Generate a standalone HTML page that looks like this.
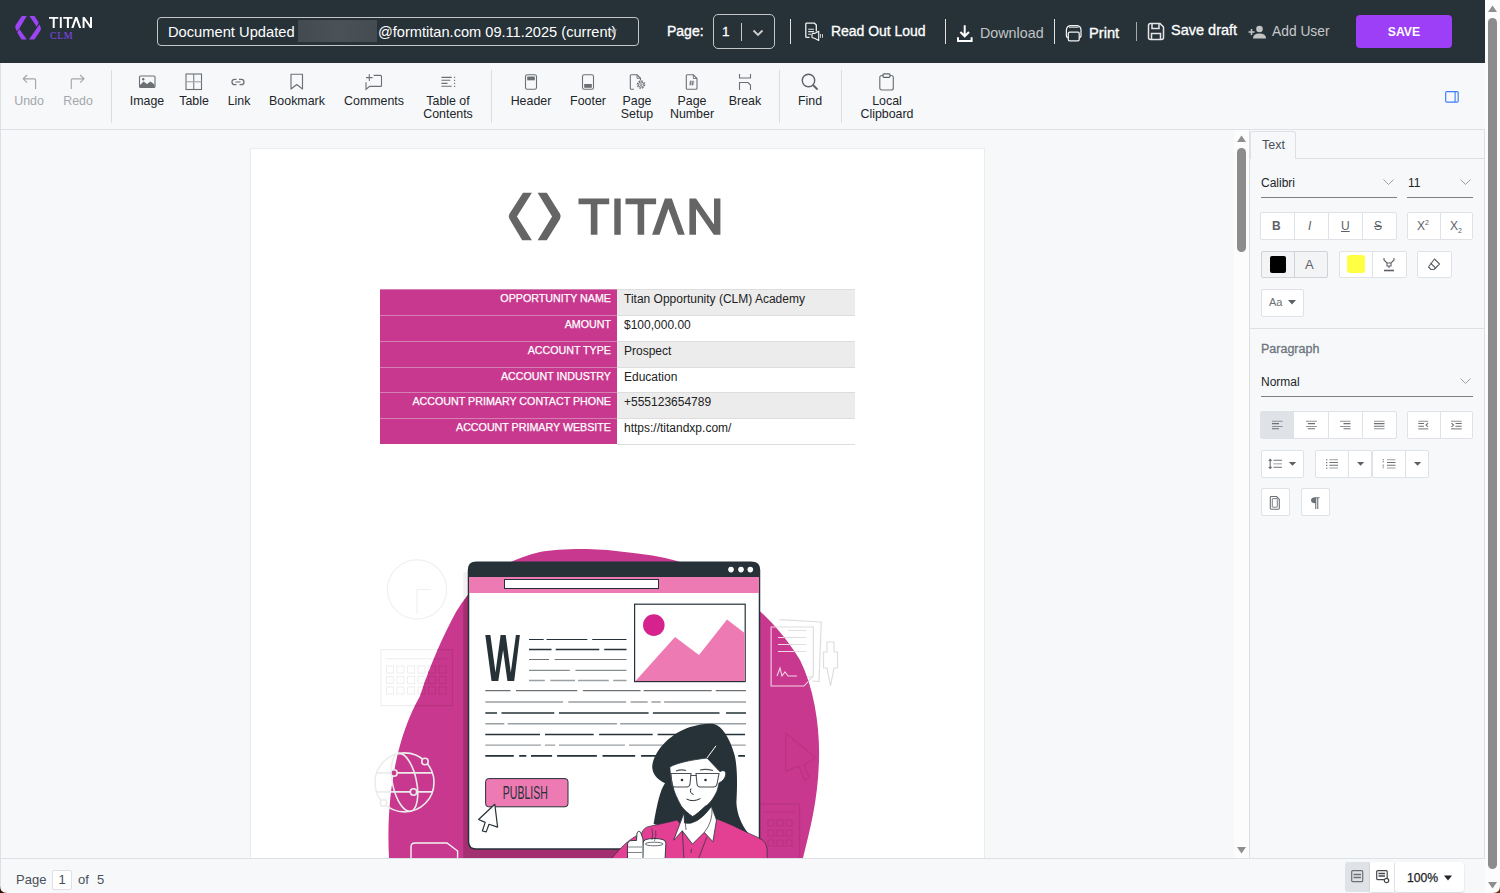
<!DOCTYPE html>
<html><head><meta charset="utf-8">
<style>
*{box-sizing:border-box;margin:0;padding:0}
html,body{width:1500px;height:893px;overflow:hidden;background:#f7f8fa;font-family:"Liberation Sans",sans-serif}
.abs{position:absolute}
#hdr{position:absolute;left:0;top:0;width:1485px;height:63px;background:#263238}
#tb{position:absolute;left:0;top:63px;width:1485px;height:67px;background:#f7f8fa;border-bottom:1px solid #dde1e6;border-left:1px solid #dde1e6}
.ht{position:absolute;color:#fff;white-space:nowrap;font-size:14px}
.vsep{position:absolute;width:1px;background:#e8e8e8}
.tl{position:absolute;font-size:12.4px;color:#212529;text-align:center;line-height:13px;white-space:nowrap}
.tl.dis{color:#a3a7ab}
.tsep{position:absolute;width:1px;top:70px;height:53px;background:#dadde1}
svg{position:absolute;overflow:visible}
#sb{position:absolute;left:1485px;top:0;width:15px;height:893px;background:#fcfcfc}
.pbtn{position:absolute;background:#fff;border:1px solid #dfe2e6;border-radius:2px}
.pt{position:absolute;white-space:nowrap;color:#212529}
</style></head><body>

<!-- HEADER -->
<div id="hdr">
  <!-- logo -->
  <svg style="left:0;top:0" width="60" height="63">
    <path d="M21.8 15.9L26.8 15.9L19.3 28.6L16.8 31.2Q14.6 28.5 15.4 25.6Z" fill="#9d44f5"/>
    <path d="M19.3 29L26.8 39.6L21.5 39.6L17.2 32.5Z" fill="#9d44f5"/>
    <path d="M29.4 15.9L34.4 15.9L38.7 22.6L36.7 26.7Z" fill="#9d44f5"/>
    <path d="M39.4 24.2Q41.6 27.5 40.5 30.6L34.4 39.6L29 39.6L37.2 27.4Z" fill="#9d44f5"/>
  </svg>
  <svg style="left:0;top:0" width="100" height="40"><g fill="#fff" transform="translate(25.2 12.9) scale(0.303)">
  <path d="M78.5 13.5H109.2V19.2H97.4V49.8H90.8V19.2H78.5Z"/>
  <path d="M114.3 13.5H120.7V49.8H114.3Z"/>
  <path d="M125.5 13.5H156.1V19.2H144.2V49.8H137.6V19.2H125.5Z"/>
  <path d="M164.9 13.5H171.8L184.8 49.8H177.9L168.4 23.8L159.5 49.8H152.1Z"/>
  <path d="M189.4 13.5H196L214 39.5V13.5H220.4V49.8H213.8L196 24V49.8H189.4Z"/>
</g></svg>
  <div class="ht" style="left:50px;top:30px;font-size:10px;font-family:'Liberation Serif',serif;color:#8b45f0;letter-spacing:0.5px">CLM</div>

  <div class="abs" style="left:157px;top:17px;width:482px;height:29px;border:1.5px solid #c3c6c9;border-radius:4px"></div>
  <div class="ht" style="left:168px;top:24px;font-size:14.7px">Document Updated</div>
  <div class="abs" style="left:298px;top:20px;width:79px;height:22px;background:linear-gradient(90deg,#434b51,#4a5258,#444c52)"></div>
  <div class="ht" style="left:378px;top:24px;font-size:14.6px">@formtitan.com 09.11.2025 (current)</div>
  <svg style="left:610px;top:29px" width="8" height="6"><path d="M0.5 0.5H7L3.75 5Z" fill="#a9adb1"/></svg>

  <div class="ht" style="left:667px;top:23px;font-size:14px;-webkit-text-stroke:0.35px #fff">Page:</div>
  <div class="abs" style="left:713px;top:14px;width:62px;height:35px;border:1.5px solid #c3c6c9;border-radius:5px"></div>
  <div class="ht" style="left:722px;top:24px;font-size:13.5px;-webkit-text-stroke:0.3px #fff">1</div>
  <div class="abs" style="left:741px;top:23px;width:1px;height:18px;background:#c8c8c8"></div>
  <svg style="left:752px;top:28.7px" width="12" height="8"><path d="M1.5 1.5L6 6L10.5 1.5" stroke="#d0d0d0" stroke-width="1.8" fill="none"/></svg>

  <div class="abs" style="left:790px;top:19px;width:1.3px;height:25px;background:#e0e0e0"></div>
  <!-- read out loud icon -->
  <svg style="left:800px;top:18px" width="30" height="28">
    <path d="M9.5 19.4H6.7Q5.8 19.4 5.8 18.5V6Q5.8 5.2 6.7 5.2H14.5L16.3 7V13.5" stroke="#f0f0f0" stroke-width="1.3" fill="none"/>
    <path d="M8.2 11.2H14M8.2 13.6H14M8.2 16.3H11" stroke="#e6e6e6" stroke-width="1.1"/>
    <path d="M12 16.2Q12 15.3 13 15.3H15L18.7 13.3V22.5L15 20.5Q13 20.2 12 19.4Z" stroke="#f0f0f0" stroke-width="1.2" fill="#263238" stroke-linejoin="round"/>
    <path d="M20.5 16V19.8M22.5 16V19.8" stroke="#d8d8d8" stroke-width="0.9"/>
  </svg>
  <div class="ht" style="left:831px;top:23px;font-size:14px;-webkit-text-stroke:0.3px #fff;letter-spacing:-0.03px">Read Out Loud</div>

  <div class="abs" style="left:945px;top:19px;width:1.3px;height:25px;background:#e0e0e0"></div>
  <svg style="left:956px;top:24px" width="18" height="19">
    <path d="M8.7 1.2V12M4.4 8L8.7 12.3L13 8" stroke="#fff" stroke-width="2" fill="none"/>
    <path d="M2 13.2V17H15.6V13.2" stroke="#fff" stroke-width="2" fill="none"/>
  </svg>
  <div class="ht" style="left:980px;top:25px;font-size:14.3px;color:#c2c4c6">Download</div>

  <div class="abs" style="left:1054px;top:19px;width:1.3px;height:25px;background:#e0e0e0"></div>
  <svg style="left:1060px;top:18px" width="30" height="28"><g transform="translate(-1060 -18)" stroke="#f2f2f2" fill="none" stroke-width="1.25">
    <path d="M1068.2 37.6H1068Q1066.4 37.6 1066.4 35.5V30.2Q1066.4 26.3 1070.3 25.6H1077.6Q1081 26.3 1081 30.2V35.5Q1081 37.6 1079.3 37.6"/>
    <path d="M1069 27.2H1078.6" stroke-width="1"/>
    <rect x="1068.3" y="32.2" width="10.9" height="8.6" rx="1.3"/>
    </g></svg>
  <div class="ht" style="left:1089px;top:25px;font-size:14.7px;-webkit-text-stroke:0.35px #fff">Print</div>

  <div class="abs" style="left:1136px;top:22px;width:1px;height:19px;background:#a5a9ad"></div>
  <svg style="left:1146px;top:22px" width="20" height="20">
    <path d="M2.5 3.5Q2.5 1.5 4.5 1.5H14L17.5 5V15.5Q17.5 17.5 15.5 17.5H4.5Q2.5 17.5 2.5 15.5Z" stroke="#e6e6e6" stroke-width="1.5" fill="none"/>
    <path d="M6 1.5V6.5H13V1.5M5.5 17.5V11.5H14.5V17.5" stroke="#e6e6e6" stroke-width="1.5" fill="none"/>
  </svg>
  <div class="ht" style="left:1171px;top:22px;font-size:14.5px;-webkit-text-stroke:0.3px #fff">Save draft</div>

  <svg style="left:1248px;top:25px" width="20" height="15">
    <path d="M0.5 7H6.5M3.5 4V10" stroke="#c4c4c4" stroke-width="1.6"/>
    <circle cx="11.5" cy="4" r="3.3" fill="#c4c4c4"/>
    <path d="M5 13.5Q5 8.5 11.5 8.5Q18 8.5 18 13.5Z" fill="#c4c4c4"/>
  </svg>
  <div class="ht" style="left:1272px;top:24px;font-size:13.8px;color:#c6c8ca">Add User</div>

  <div class="abs" style="left:1356px;top:15px;width:96px;height:33px;background:#9c3ff6;border-radius:4px"></div>
  <div class="ht" style="left:1356px;width:96px;text-align:center;top:25px;font-size:12.2px;font-weight:bold">SAVE</div>
</div>

<!-- TOOLBAR -->
<div id="tb">
</div>
<div class="tsep" style="left:111px"></div>
<div class="tsep" style="left:491px"></div>
<div class="tsep" style="left:779px"></div>
<div class="tsep" style="left:841px"></div>
<!-- icons -->
<svg style="left:10px;top:68px" width="90" height="25"><g transform="translate(-10 -68)" stroke="#a3a7ab" stroke-width="1.15" fill="none"><path d="M35.6 89V79.8Q35.6 78.8 34.6 78.8H23.3M27.1 75L23.2 78.8L27.1 82.6"/><path d="M71.3 89V79.8Q71.3 78.8 72.3 78.8H83.9M80.1 75L84 78.8L80.1 82.6"/></g></svg>
<svg style="left:138px;top:75px" width="18" height="14"><rect x="1.5" y="1" width="15.5" height="11.5" rx="1" stroke="#6c7075" stroke-width="1.1" fill="none"/><path d="M2 12V10L5.5 6.5L9 9L12.5 6.5L16.5 9.5V12Z" fill="#6c7075"/><circle cx="5.2" cy="4.3" r="1.2" fill="#6c7075"/></svg>
<svg style="left:185px;top:73px" width="18" height="18"><rect x="1" y="1" width="15.5" height="15.5" stroke="#6c7075" stroke-width="1.1" fill="none"/><path d="M8.75 1V16.5" stroke="#6c7075" stroke-width="1"/><path d="M1 8.75H16.5" stroke="#a5a9ad" stroke-width="1.2"/></svg>
<svg style="left:230px;top:77px" width="17" height="10"><path d="M6.5 2.3H4.8Q2 2.3 2 5Q2 7.7 4.8 7.7H6.5M9 2.3H11.2Q14 2.3 14 5Q14 7.7 11.2 7.7H9.5" stroke="#6c7075" stroke-width="1.3" fill="none"/><path d="M5.5 5H10.5" stroke="#6c7075" stroke-width="1.1" fill="none"/></svg>
<svg style="left:290px;top:73px" width="14" height="17"><path d="M1 1.2H12.5V16L6.75 11.5L1 16Z" stroke="#6c7075" stroke-width="1.15" fill="none" stroke-linejoin="round"/></svg>
<svg style="left:355px;top:68px" width="110" height="27"><path d="M369.3-355 0" stroke="none"/><g transform="translate(-355 -68)"><path d="M369.3 74.3V81M366 77.6H372.6" stroke="#6c7075" stroke-width="1.1"/><path d="M373.7 75.4H380.5Q381.5 75.4 381.5 76.4V85.4Q381.5 86.4 380.5 86.4H369.7L366 89.3V82.3" stroke="#6c7075" stroke-width="1.1" fill="none"/>
<path d="M441.4 77.4H451.7M441.4 80.3H450.3M441.4 83.4H447.5M441.4 86.3H451.7" stroke="#6c7075" stroke-width="1.1"/><path d="M454.6 76.8V78M454.6 79.7V80.9M454.6 82.8V84M454.6 85.7V86.9" stroke="#6c7075" stroke-width="1.1"/></g></svg>
<svg style="left:515px;top:68px" width="250" height="27"><g transform="translate(-515 -68)" stroke="#6c7075" fill="none" stroke-width="1.1">
<rect x="525.5" y="74.8" width="11" height="14.5" rx="1.8"/><rect x="527.2" y="76.5" width="7.6" height="3.8" fill="#6c7075" stroke="none"/>
<rect x="582.5" y="74.8" width="11" height="14.5" rx="1.8"/><rect x="584.2" y="84" width="7.6" height="3.8" fill="#6c7075" stroke="none"/>
<path d="M634 89.3H631.3Q630.3 89.3 630.3 88.3V75.8Q630.3 74.8 631.3 74.8H637L640.5 78.3V80.5"/><path d="M637 74.8V78.3H640.5" stroke-width="0.9"/>
<circle cx="641" cy="84.6" r="3.6" stroke-width="1.3" stroke-dasharray="1.6 1.2"/><circle cx="641" cy="84.6" r="2.6" stroke-width="0.9"/><circle cx="641" cy="84.6" r="1" stroke-width="0.8"/>
<path d="M687.3 89.3Q686.3 89.3 686.3 88.3V75.8Q686.3 74.8 687.3 74.8H693.3L697 78.5V88.3Q697 89.3 696 89.3Z"/><path d="M693.3 74.8V78.5H697" stroke-width="0.9"/>
<path d="M690.8 80.5L690.2 85.5M693 80.5L692.4 85.5M689.5 82H694.3M689.3 84H694" stroke-width="0.85"/>
<path d="M739.5 74V78H750.5V74"/><path d="M739.5 90V82.5H748L750.5 85V90"/>
</g></svg>
<svg style="left:801px;top:73px" width="18" height="18"><circle cx="7.5" cy="7.5" r="6.2" stroke="#5d6166" stroke-width="1.4" fill="none"/><path d="M12 12L16.5 16.5" stroke="#5d6166" stroke-width="1.8"/></svg>
<svg style="left:879px;top:73px" width="16" height="18"><rect x="0.8" y="2.5" width="13.5" height="14.5" rx="2" stroke="#6c7075" stroke-width="1.15" fill="none"/><rect x="4" y="0.8" width="7" height="3.5" rx="1" stroke="#5d6166" stroke-width="1.2" fill="#f7f8fa"/></svg>
<svg style="left:1440px;top:86px" width="25" height="22"><g transform="translate(-1440 -86)"><rect x="1445.7" y="91.6" width="12.5" height="10.5" rx="1.2" stroke="#3d7bfa" stroke-width="1.15" fill="none"/><path d="M1455.1 91.6V102" stroke="#3d7bfa" stroke-width="1.1"/></g></svg>
<!-- labels -->
<div class="tl dis" style="left:-1px;width:60px;top:95px">Undo</div>
<div class="tl dis" style="left:48px;width:60px;top:95px">Redo</div>
<div class="tl" style="left:117px;width:60px;top:95px">Image</div>
<div class="tl" style="left:164px;width:60px;top:95px">Table</div>
<div class="tl" style="left:209px;width:60px;top:95px">Link</div>
<div class="tl" style="left:257px;width:80px;top:95px">Bookmark</div>
<div class="tl" style="left:334px;width:80px;top:95px">Comments</div>
<div class="tl" style="left:408px;width:80px;top:95px">Table of<br>Contents</div>
<div class="tl" style="left:491px;width:80px;top:95px">Header</div>
<div class="tl" style="left:548px;width:80px;top:95px">Footer</div>
<div class="tl" style="left:597px;width:80px;top:95px">Page<br>Setup</div>
<div class="tl" style="left:652px;width:80px;top:95px">Page<br>Number</div>
<div class="tl" style="left:705px;width:80px;top:95px">Break</div>
<div class="tl" style="left:770px;width:80px;top:95px">Find</div>
<div class="tl" style="left:847px;width:80px;top:95px">Local<br>Clipboard</div>



<!-- WORKSPACE -->
<div class="abs" style="left:0;top:130px;width:1234px;height:728px;background:#f7f8fa;border-left:1px solid #dde1e6;overflow:hidden">
  <div class="abs" style="left:249px;top:18px;width:735px;height:800px;background:#fff;border:1.5px solid #ececec"></div>
</div>
<!-- DOCUMENT CONTENT -->
<div class="abs" style="left:0;top:0;width:1234px;height:858px;overflow:hidden">
<svg style="left:500px;top:185px" width="230" height="60">
  <g fill="#656565">
  <path d="M23 7.7H31.9L16.9 31.4L31.9 55.2H22.2L9.5 34Q8 31.4 9.5 28.8Z"/>
  <path d="M37.6 7.7H46.8L60 28.8Q61.5 31.4 60 34L46.8 55.2H37.6L52.1 31.4Z"/>
  <path d="M78.5 13.5H109.2V19.2H97.4V49.8H90.8V19.2H78.5Z"/>
  <path d="M114.3 13.5H120.7V49.8H114.3Z"/>
  <path d="M125.5 13.5H156.1V19.2H144.2V49.8H137.6V19.2H125.5Z"/>
  <path d="M164.9 13.5H171.8L184.8 49.8H177.9L168.4 23.8L159.5 49.8H152.1Z"/>
  <path d="M189.4 13.5H196L214 39.5V13.5H220.4V49.8H213.8L196 24V49.8H189.4Z"/>
  </g>
</svg>
<div class="abs" style="left:380px;top:289px;width:237px;height:26px;background:#c8388e;border-top:1px solid #d67fb3"></div>
<div class="abs" style="left:617px;top:289px;width:238px;height:26px;background:#ececec;border-top:1px solid #dddddd"></div>
<div class="pt" style="-webkit-text-stroke:0.25px #fff;left:380px;width:231px;text-align:right;font-size:10.7px;top:292px;color:#fff">OPPORTUNITY NAME</div>
<div class="pt" style="left:624px;top:292px;font-size:12px;color:#222">Titan Opportunity (CLM) Academy</div>
<div class="abs" style="left:380px;top:315px;width:237px;height:26px;background:#c8388e;border-top:1px solid #d67fb3"></div>
<div class="abs" style="left:617px;top:315px;width:238px;height:26px;background:#ffffff;border-top:1px solid #dddddd"></div>
<div class="pt" style="-webkit-text-stroke:0.25px #fff;left:380px;width:231px;text-align:right;font-size:10.7px;top:318px;color:#fff">AMOUNT</div>
<div class="pt" style="left:624px;top:318px;font-size:12px;color:#222">$100,000.00</div>
<div class="abs" style="left:380px;top:341px;width:237px;height:26px;background:#c8388e;border-top:1px solid #d67fb3"></div>
<div class="abs" style="left:617px;top:341px;width:238px;height:26px;background:#ececec;border-top:1px solid #dddddd"></div>
<div class="pt" style="-webkit-text-stroke:0.25px #fff;left:380px;width:231px;text-align:right;font-size:10.7px;top:344px;color:#fff">ACCOUNT TYPE</div>
<div class="pt" style="left:624px;top:344px;font-size:12px;color:#222">Prospect</div>
<div class="abs" style="left:380px;top:367px;width:237px;height:25px;background:#c8388e;border-top:1px solid #d67fb3"></div>
<div class="abs" style="left:617px;top:367px;width:238px;height:25px;background:#ffffff;border-top:1px solid #dddddd"></div>
<div class="pt" style="-webkit-text-stroke:0.25px #fff;left:380px;width:231px;text-align:right;font-size:10.7px;top:370px;color:#fff">ACCOUNT INDUSTRY</div>
<div class="pt" style="left:624px;top:370px;font-size:12px;color:#222">Education</div>
<div class="abs" style="left:380px;top:392px;width:237px;height:26px;background:#c8388e;border-top:1px solid #d67fb3"></div>
<div class="abs" style="left:617px;top:392px;width:238px;height:26px;background:#ececec;border-top:1px solid #dddddd"></div>
<div class="pt" style="-webkit-text-stroke:0.25px #fff;left:380px;width:231px;text-align:right;font-size:10.7px;top:395px;color:#fff">ACCOUNT PRIMARY CONTACT PHONE</div>
<div class="pt" style="left:624px;top:395px;font-size:12px;color:#222">+555123654789</div>
<div class="abs" style="left:380px;top:418px;width:237px;height:26px;background:#c8388e;border-top:1px solid #d67fb3"></div>
<div class="abs" style="left:617px;top:418px;width:238px;height:26px;background:#ffffff;border-top:1px solid #dddddd"></div>
<div class="pt" style="-webkit-text-stroke:0.25px #fff;left:380px;width:231px;text-align:right;font-size:10.7px;top:421px;color:#fff">ACCOUNT PRIMARY WEBSITE</div>
<div class="pt" style="left:624px;top:421px;font-size:12px;color:#222">https://titandxp.com/</div>
<div class="abs" style="left:617px;top:444px;width:238px;height:1px;background:#dddddd"></div>

<svg style="left:0;top:0" width="1234" height="858">
  <!-- faint bg icons -->
  <g stroke="#f0f0f0" stroke-width="1.2" fill="none">
    <circle cx="417" cy="589.5" r="29.6"/>
    <path d="M417 613.5V589.5H431"/>
  </g>
  <g stroke="#eeeeee" stroke-width="1.1" fill="none">
    <rect x="381" y="649.7" width="71.4" height="56"/>
    <path d="M386 658.8H447"/>
    <path d="M386.5 666h7v7h-7zM397 666h7v7h-7zM407.5 666h7v7h-7zM418 666h7v7h-7zM428.5 666h7v7h-7zM439 666h7v7h-7zM386.5 676.5h7v7h-7zM397 676.5h7v7h-7zM407.5 676.5h7v7h-7zM418 676.5h7v7h-7zM428.5 676.5h7v7h-7zM439 676.5h7v7h-7zM386.5 687h7v7h-7zM397 687h7v7h-7zM407.5 687h7v7h-7zM418 687h7v7h-7zM428.5 687h7v7h-7zM439 687h7v7h-7z"/>
  </g>
  <g stroke="#dedede" stroke-width="1.2" fill="none">
    <path d="M779.2 619.7L821.3 622L819 681.6L812 681"/>
    <path d="M771.1 627H813.3V676L804 686H771.1Z"/>
    <path d="M778 637.5H806M778 644.5H806M778 651.5H806M788 630.5H806"/>
    <path d="M777 676L780 668L782 676L785 672L788 676H797"/>
    <path d="M804 686V677H813.3"/>
    <path d="M827 642H834V652H837.5V668H834L830.5 686L827 668H823.5V652H827Z"/>
  </g>
  <!-- blob -->
  <path d="M389 858C386 800 395 740 420 696C430 665 442 638 456 612C475 580 500 562 540 552C560 548 600 548 620 551.6C645 554 662 557 677 561C720 575 770 610 800 660C815 690 820 730 819 760C818 800 810 830 803 858Z" fill="#c8388e"/>
  <clipPath id="blobclip"><path d="M389 858C386 800 395 740 420 696C430 665 442 638 456 612C475 580 500 562 540 552C560 548 600 548 620 551.6C645 554 662 557 677 561C720 575 770 610 800 660C815 690 820 730 819 760C818 800 810 830 803 858Z"/></clipPath>
  <g clip-path="url(#blobclip)" fill="none" stroke-width="1.1">
    <g stroke="#b8337f">
      <rect x="381" y="649.7" width="71.4" height="56"/>
      <path d="M386 658.8H447"/>
      <path d="M386.5 666h7v7h-7zM397 666h7v7h-7zM407.5 666h7v7h-7zM418 666h7v7h-7zM428.5 666h7v7h-7zM439 666h7v7h-7zM386.5 676.5h7v7h-7zM397 676.5h7v7h-7zM407.5 676.5h7v7h-7zM418 676.5h7v7h-7zM428.5 676.5h7v7h-7zM439 676.5h7v7h-7zM386.5 687h7v7h-7zM397 687h7v7h-7zM407.5 687h7v7h-7zM418 687h7v7h-7zM428.5 687h7v7h-7zM439 687h7v7h-7z"/>
      <path d="M785.7 732.9L815.2 757.6L803.8 765.2L809.5 777.6L804.8 780.5L799 766.2L785.7 771Z" stroke-linejoin="round"/>
      <rect x="759.6" y="803.9" width="40" height="60"/>
      <path d="M764 812H795M768 820h6v6h-6zM777 820h6v6h-6zM786 820h6v6h-6zM768 830h6v6h-6zM777 830h6v6h-6zM786 830h6v6h-6zM768 840h6v6h-6zM777 840h6v6h-6zM786 840h6v6h-6z"/>
    </g>
    <g stroke="#f3d3e6">
      <path d="M771.1 627H813.3V676L804 686H771.1Z"/>
      <path d="M778 637.5H806M778 644.5H806M778 651.5H806M788 630.5H806"/>
      <path d="M777 676L780 668L782 676L785 672L788 676H797"/>
    </g>
  </g>
  <g stroke="#ececec" stroke-width="1.6" fill="none">
    <circle cx="404.5" cy="782.4" r="29.5"/>
    <ellipse cx="404.5" cy="782.4" rx="12" ry="29.5" transform="rotate(-12 404.5 782.4)"/>
    <path d="M377 772.9H432M376 791.9H433"/>
    <circle cx="425" cy="761.5" r="3.2" fill="#c8388e"/>
    <circle cx="394" cy="773" r="3.2" fill="#c8388e"/>
    <circle cx="413.5" cy="792" r="3.2" fill="#c8388e"/>
    <circle cx="383.5" cy="803" r="3.2" fill="#fff"/>
  </g>
  <g stroke="#f5f5f5" stroke-width="1.4" fill="none">
    <path d="M411 858V847Q411 843 415 843H447L457.6 851V858"/>
  </g>
  <rect x="463.3" y="572" width="5.5" height="30" fill="#f2f2f2"/>
  <!-- window shadow -->
  <path d="M463.3 585V856Q463.3 866 473.3 866H760V585Z" fill="#a32f70" clip-path="url(#blobclip)"/>
  <!-- window -->
  <path d="M468.5 570Q468.5 562.3 476.5 562.3H751Q759.5 562.3 759.5 570V849H476Q468.5 849 468.5 841.5Z" fill="#fff" stroke="#263238" stroke-width="1.5"/>
  <path d="M468.5 577V570Q468.5 562.3 476.5 562.3H751Q759.5 562.3 759.5 570V577Z" fill="#263238"/>
  <rect x="469" y="577" width="290" height="16" fill="#ee7ab3"/>
  <rect x="504.5" y="579.5" width="154" height="9" fill="#fff" stroke="#263238" stroke-width="1"/>
  <circle cx="731" cy="569.6" r="2.8" fill="#fff"/>
  <circle cx="741" cy="569.6" r="2.8" fill="#fff"/>
  <circle cx="750.3" cy="569.6" r="2.8" fill="#fff"/>
  <!-- image box -->
  <rect x="634.6" y="604.2" width="110.6" height="77.4" fill="#fff" stroke="#263238" stroke-width="1.2"/>
  <path d="M635.5 681L675 637L699 655L727 619.5L744.6 633V681Z" fill="#ee7ab3"/>
  <circle cx="653.8" cy="625.1" r="10.8" fill="#d6228c"/>
  <!-- W -->
  <path d="M485.3 635.1H490.4L495.5 672.6L500.6 635.1H505.7L510.8 672.6L515.9 635.1H519.9L514.2 681.1H507.4L503.1 649.9L498.3 681.1H491.5Z" fill="#263238"/>
  <!-- short lines -->
  <g stroke-width="1.3">
    <path d="M529 639.5H543.7M546.5 639.5H587.3M592.2 639.5H626.5" stroke="#263238" stroke-width="1"/>
    <path d="M529 649.5H551.5M555.7 649.5H599.3M604.2 649.5H626.5" stroke="#263238" stroke-width="1.5"/>
    <path d="M529 659.5H549M554.7 659.5H626.5" stroke="#6b7175" stroke-width="1"/>
    <path d="M529 670.3H569.8M575.4 670.3H626.5" stroke="#6b7175" stroke-width="1"/>
    <path d="M529 680.5H544.8M550.3 680.5H575M578 680.5H608.8M613.2 680.5H626.5" stroke="#9aa0a4" stroke-width="1.3"/>
    <path d="M485.3 690.6H510.5M516 690.6H577.3M582.9 690.6H640.6M643.6 690.6H711.7M715.8 690.6H746" stroke="#6b7175" stroke-width="1.2"/>
    <path d="M485.3 702H563.1M568.3 702H626.2M630.5 702H647.7M651.4 702H660.7M664.1 702H746" stroke="#9aa0a4" stroke-width="1.4"/>
    <path d="M485.3 713H497M501.5 713H554.3M559 713H648.6M652.9 713H719.5M726 713H746" stroke="#263238" stroke-width="1.7"/>
    <path d="M485.3 723.8H504.3M507.7 723.8H616.9M620.2 723.8H746" stroke="#9aa0a4" stroke-width="1.4"/>
    <path d="M485.3 734.5H540M545 734.5H593.7M599.1 734.5H652.7M657.6 734.5H717.7M721.4 734.5H745" stroke="#263238" stroke-width="1.6"/>
    <path d="M485.3 745.1H540.9M545 745.1H555.3M559 745.1H624.9M629 745.1H745.7" stroke="#9aa0a4" stroke-width="1.4"/>
    <path d="M485.3 755.9H513.8M519.2 755.9H526.3M531 755.9H552.1M557.1 755.9H596.9M602.5 755.9H635.2M641.1 755.9H690M738.2 755.9H745" stroke="#263238" stroke-width="1.7"/>
  </g>
  <!-- publish -->
  <rect x="485.6" y="778.6" width="82.4" height="28.2" rx="3" fill="#ee7ab3" stroke="#263238" stroke-width="1"/>
  <text x="525.3" y="799.5" text-anchor="middle" font-family="Liberation Sans" font-size="17.5" fill="#263238" transform="translate(525.3 0) scale(0.6 1) translate(-525.3 0)">PUBLISH</text>
  <path d="M494.8 804.3L497.6 827.1L489 824.3L486.2 831.9L482.4 831L485.2 822.4L478.6 819.5Z" fill="#fff" stroke="#263238" stroke-width="1.2" stroke-linejoin="round"/>
  <!-- woman -->
  <path d="M653.6 824C657 805 660 790 665 783.2C656 779 651 772 652.5 764C656 748 672 733 690 727C700 724 708 723 714 724C722 726 730 738 734.7 755.6C738 770 737 790 736.4 802.7C737 815 742 825 748 833L700 835Z" fill="#263238"/>
  <path d="M669.8 767C677 763 690 760 707 758L720 771.8C722 770 726 770 725.8 774C725.5 778 723 781 719 783C718 788 717 791 716.9 791.3C713 800 708 805 705.5 806C700 811 696 815 692.5 816.5C688 813 684 810 681.2 806C677 798 674 792 673 786.4C671 778 670 772 669.8 767Z" fill="#fff" stroke="#263238" stroke-width="0.8"/>
  <path d="M707 758L716 745.8" stroke="#fff" stroke-width="1"/>
  <g stroke="#4a5056" stroke-width="1.1" fill="none">
    <path d="M671 773.5H691L690 784Q689.5 787 686.5 787H674.5Q672 787 671.8 784Z"/>
    <path d="M696 773.5H719L717 784Q716.5 787 713.5 787H700Q697.5 787 697 784Z"/>
    <path d="M690.8 775.5H696.8M676 771Q681 769 686 770.5M700 770Q706 768.5 713 770.5"/>
  </g>
  <g stroke="#263238" stroke-width="1" fill="none">
    <path d="M691 788.5Q689 793 693.5 794.5"/>
    <path d="M686.5 799Q693 802.5 700.5 798.5"/>
  </g>
  <circle cx="682" cy="780" r="1.3" fill="#263238"/>
  <circle cx="705.5" cy="780" r="1.3" fill="#263238"/>
  
  <path d="M612 858C620 848 632 836 641.6 833.9C643 829 646 827 649 826.5C660 824 670 822 677 820L684 828L712 826L716.9 818.9C728 823 738 828 746.1 831.9C752 835 758 837 762.3 840C766 843 767.2 847 767.2 852V860H612Z" fill="#e33f93" stroke="#263238" stroke-width="0.7"/>
  <path d="M684.5 823Q697 826 711.5 806.5L716.5 820L712.9 841.7L704.3 832.3L692.5 844.1L682.3 830.8L673.7 840.2L684 813Z" fill="#fff" stroke="#263238" stroke-width="0.8" stroke-linejoin="round"/>
  
  <path d="M684.5 813L686 830M712 807Q713 822 704.3 832.3" stroke="#263238" stroke-width="0.7" fill="none"/>
  <path d="M682.3 830.8L684 860M706.8 837L698 860M691.5 849L691 853" stroke="#263238" stroke-width="0.7" fill="none"/>
  <path d="M642.4 860L643 843Q643 838.5 654 838.5Q665.9 838.5 665.9 843L665 860Z" fill="#fff" stroke="#263238" stroke-width="0.9"/>
  <ellipse cx="654.2" cy="844" rx="9" ry="1.8" fill="none" stroke="#263238" stroke-width="0.7"/>
  <path d="M651.8 828.4Q653.5 834 652 840M655.7 830.5Q656.5 836 654.5 841" stroke="#263238" stroke-width="0.6" fill="none"/>
  <path d="M627.5 860V845Q627.5 840.5 632 840.5H636.5L637 833Q638 830 640.5 832L643 839V860Z" fill="#fff" stroke="#263238" stroke-width="0.9" stroke-linejoin="round"/><path d="M628 847H642M628 852.5H642" stroke="#263238" stroke-width="0.6"/>
</svg>
</div>

<!-- doc scrollbar -->
<div class="abs" style="left:1234px;top:130px;width:15px;height:728px;background:#fcfcfc"></div>
<svg style="left:1237px;top:134.5px" width="10" height="8"><path d="M0 7L4.5 0.5L9 7Z" fill="#8f8f8f"/></svg>
<div class="abs" style="left:1237px;top:148px;width:9px;height:104px;background:#8c8c8c;border-radius:5px"></div>
<svg style="left:1236.5px;top:847px" width="10" height="8"><path d="M0 0L4.5 6.5L9 0Z" fill="#8f8f8f"/></svg>
<!-- right panel -->
<div class="abs" style="left:1249px;top:130px;width:236px;height:728px;background:#f7f8fa;border-left:1px solid #dde1e6;border-right:1px solid #dde1e6"></div>
<div class="abs" style="left:1250px;top:158px;width:234px;height:1px;background:#dde1e6"></div>
<div class="abs" style="left:1250px;top:131px;width:46px;height:28px;background:#f7f8fa;border:1px solid #dde1e6;border-bottom:none;border-radius:3px 3px 0 0"></div>
<div class="pt" style="left:1262px;top:138px;font-size:12.5px;color:#495057">Text</div>

<!-- panel content -->
<div class="pt" style="left:1261px;top:176px;font-size:12px;color:#212529">Calibri</div>
<svg style="left:1383px;top:179px" width="12" height="7"><path d="M0.5 0.5L5.5 5.5L10.5 0.5" stroke="#9aa0a6" stroke-width="1" fill="none"/></svg>
<div class="abs" style="left:1261px;top:196.5px;width:136px;height:1.5px;background:#7d8185"></div>
<div class="pt" style="left:1408px;top:176px;font-size:12px;color:#212529">11</div>
<svg style="left:1460px;top:179px" width="12" height="7"><path d="M0.5 0.5L5.5 5.5L10.5 0.5" stroke="#9aa0a6" stroke-width="1" fill="none"/></svg>
<div class="abs" style="left:1407px;top:196.5px;width:66px;height:1.5px;background:#7d8185"></div>

<div class="pbtn" style="left:1260px;top:212px;width:137px;height:28px"></div>
<div class="abs" style="left:1294px;top:213px;width:1px;height:26px;background:#dfe2e6"></div>
<div class="abs" style="left:1328px;top:213px;width:1px;height:26px;background:#dfe2e6"></div>
<div class="abs" style="left:1362px;top:213px;width:1px;height:26px;background:#dfe2e6"></div>
<div class="pt" style="left:1272px;top:219px;font-size:12px;font-weight:bold;color:#5d6166">B</div>
<div class="pt" style="left:1308px;top:219px;font-size:12px;font-style:italic;color:#5d6166">I</div>
<div class="pt" style="left:1341px;top:219px;font-size:12px;color:#5d6166;text-decoration:underline">U</div>
<div class="pt" style="left:1374px;top:219px;font-size:12px;color:#5d6166;text-decoration:line-through">S</div>
<div class="pbtn" style="left:1407px;top:212px;width:66px;height:28px"></div>
<div class="abs" style="left:1440px;top:213px;width:1px;height:26px;background:#dfe2e6"></div>
<div class="pt" style="left:1417px;top:219px;font-size:12px;color:#5d6166">X<sup style="font-size:7px">2</sup></div>
<div class="pt" style="left:1450px;top:219px;font-size:12px;color:#5d6166">X<sub style="font-size:7px">2</sub></div>

<div class="pbtn" style="left:1261px;top:251px;width:67px;height:27px;background:#f3f4f6;border-color:#cfd3d8"></div>
<div class="abs" style="left:1294px;top:252px;width:1px;height:25px;background:#cfd3d8"></div>
<div class="abs" style="left:1270px;top:256px;width:16px;height:17px;background:#000;border-radius:2px"></div>
<div class="pt" style="left:1305px;top:257px;font-size:13px;color:#5d6166">A</div>
<div class="pbtn" style="left:1339px;top:251px;width:68px;height:27px"></div>
<div class="abs" style="left:1372px;top:252px;width:1px;height:25px;background:#dfe2e6"></div>
<div class="abs" style="left:1347px;top:255px;width:18px;height:18px;background:#ffff44;border-radius:3px"></div>
<svg style="left:1383px;top:257px" width="12" height="15"><path d="M1 1V3L4 6V9H8V6L11 3V1M4 6H8M6 9V11" stroke="#5d6166" stroke-width="1.1" fill="none"/><path d="M1 13.5H11" stroke="#5d6166" stroke-width="1.6"/></svg>
<div class="pbtn" style="left:1417px;top:251px;width:35px;height:27px"></div>
<svg style="left:1427px;top:258px" width="14" height="13"><path d="M7.5 1L12.5 6L7 11.5H4L1.5 9L7.5 1Z" stroke="#5d6166" stroke-width="1.1" fill="none" stroke-linejoin="round"/><path d="M3.5 5L9 10.5" stroke="#5d6166" stroke-width="1.1"/></svg>

<div class="pbtn" style="left:1261px;top:289px;width:43px;height:28px"></div>
<div class="pt" style="left:1269px;top:296px;font-size:11px;color:#6c7075">Aa</div>
<svg style="left:1288px;top:300px" width="8" height="5"><path d="M0 0H8L4 4.5Z" fill="#5d6166"/></svg>

<div class="abs" style="left:1250px;top:327.5px;width:234px;height:1px;background:#dde1e6"></div>
<div class="pt" style="left:1261px;top:342px;font-size:12.5px;color:#6c757d;-webkit-text-stroke:0.3px #6c757d">Paragraph</div>
<div class="pt" style="left:1261px;top:375px;font-size:12px;color:#212529">Normal</div>
<svg style="left:1460px;top:378px" width="12" height="7"><path d="M0.5 0.5L5.5 5.5L10.5 0.5" stroke="#9aa0a6" stroke-width="1" fill="none"/></svg>
<div class="abs" style="left:1261px;top:395.5px;width:212px;height:1.5px;background:#7d8185"></div>

<div class="pbtn" style="left:1260px;top:411px;width:137px;height:28px"></div>
<div class="abs" style="left:1261px;top:412px;width:33px;height:26px;background:#dfe2e6"></div>
<div class="abs" style="left:1328px;top:412px;width:1px;height:26px;background:#dfe2e6"></div>
<div class="abs" style="left:1362px;top:412px;width:1px;height:26px;background:#dfe2e6"></div>
<div class="pbtn" style="left:1407px;top:411px;width:66px;height:28px"></div>
<div class="abs" style="left:1440px;top:412px;width:1px;height:26px;background:#dfe2e6"></div>
<div class="pbtn" style="left:1261px;top:450px;width:43px;height:28px"></div>
<div class="pbtn" style="left:1315px;top:450px;width:57px;height:28px"></div>
<div class="abs" style="left:1348px;top:451px;width:1px;height:26px;background:#dfe2e6"></div>
<div class="pbtn" style="left:1372px;top:450px;width:57px;height:28px"></div>
<div class="abs" style="left:1405px;top:451px;width:1px;height:26px;background:#dfe2e6"></div>
<svg style="left:1250px;top:400px" width="235" height="90"><g transform="translate(-1250 -400)" stroke-width="1.1" fill="none">
<path d="M1272 421.2H1282.7M1272 426.5H1282.7" stroke="#8e9296"/><path d="M1272 423.6H1279M1272 428.8H1279" stroke="#6c7075"/>
<path d="M1306 421.2H1316.8M1306 426.5H1316.8" stroke="#8e9296"/><path d="M1307.8 423.6H1315M1307.8 428.8H1315" stroke="#6c7075"/>
<path d="M1340 421.2H1350.5M1340 426.5H1350.5" stroke="#8e9296"/><path d="M1343.5 423.6H1350.5M1343.5 428.8H1350.5" stroke="#6c7075"/>
<path d="M1374 421.2H1384.5M1374 428.8H1384.5" stroke="#8e9296"/><path d="M1374 423.6H1384.5M1374 426.3H1384.5" stroke="#6c7075"/>
<path d="M1418.3 421.2H1428.3M1418.3 428.9H1428.3" stroke="#8e9296"/><path d="M1418.3 423.5H1424M1418.3 426.3H1424M1428 423.2L1426 425L1428 426.8" stroke="#6c7075"/>
<path d="M1451 421.2H1461.7M1451 428.9H1461.7" stroke="#8e9296"/><path d="M1455.5 423.5H1461.7M1455.5 426.3H1461.7M1451.5 423.2L1453.5 425L1451.5 426.8" stroke="#6c7075"/>
<path d="M1270.2 459.5V468.4M1268.8 460.8L1270.2 459.3L1271.6 460.8M1268.8 467L1270.2 468.5L1271.6 467" stroke="#6c7075"/>
<path d="M1273.4 460.2H1282M1273.4 467.3H1282" stroke="#6c7075"/><path d="M1273.4 463.8H1282" stroke="#b5b9bd" stroke-width="1.4"/>
<path d="M1288.8 462H1296.2L1292.5 465.8Z" fill="#5d6166" stroke="none"/>
<path d="M1326.7 459.2V460.4M1326.7 462V463.2M1326.7 464.8V466M1326.7 467.5V468.7" stroke="#6c7075" stroke-width="1.2"/>
<path d="M1329.4 459.8H1338M1329.4 468H1338" stroke="#9aa0a4"/><path d="M1329.4 462.5H1338M1329.4 465.3H1338" stroke="#6c7075"/>
<path d="M1357 462H1364.2L1360.6 465.8Z" fill="#5d6166" stroke="none"/>
<path d="M1383.2 459V463M1383.2 464.5V468.7" stroke="#6c7075" stroke-width="1" stroke-dasharray="1.3 0.7"/>
<path d="M1387 459.8H1395.5M1387 468H1395.5" stroke="#9aa0a4"/><path d="M1387 462.5H1395.5M1387 465.3H1395.5" stroke="#6c7075"/>
<path d="M1414 462H1421.2L1417.6 465.8Z" fill="#5d6166" stroke="none"/>
</g></svg>
<div class="pbtn" style="left:1261px;top:488px;width:29px;height:28px"></div>

<div class="pbtn" style="left:1301px;top:488px;width:29px;height:28px"></div>
<svg style="left:1250px;top:485px" width="80" height="30"><g transform="translate(-1250 -485)">
<path d="M1271.2 496.5H1276.5L1279.3 499.3V508.3Q1279.3 509.2 1278.4 509.2H1271.2Q1270.3 509.2 1270.3 508.3V497.4Q1270.3 496.5 1271.2 496.5Z" stroke="#6c7075" stroke-width="1.1" fill="none"/>
<rect x="1272.3" y="498.6" width="5" height="8.6" rx="0.5" stroke="#6c7075" stroke-width="0.9" fill="none"/>
<path d="M1315.5 497.3H1319.6V498.3H1318.3V508.9H1317.2V498.3H1316.3V508.9H1315.2V503.2Q1311 503.2 1311 500.2Q1311 497.3 1315.5 497.3Z" fill="#6c7075"/>
</g></svg>


<!-- footer -->
<div class="abs" style="left:0;top:858px;width:1485px;height:35px;background:#f7f8fa;border-top:1px solid #dde1e6;border-left:1px solid #dde1e6"></div>
<div class="pt" style="left:16px;top:872px;font-size:13px;color:#495057">Page</div>
<div class="abs" style="left:52px;top:870px;width:20px;height:20px;background:#fff;border:1px solid #dde1e6;border-radius:2px"></div>
<div class="pt" style="left:52px;width:20px;text-align:center;top:872px;font-size:13px;color:#495057">1</div>
<div class="pt" style="left:78px;top:872px;font-size:13px;color:#495057">of</div>
<div class="pt" style="left:97px;top:872px;font-size:13px;color:#495057">5</div>

<div class="abs" style="left:1345px;top:862px;width:25px;height:30px;background:#dfe2e6;border-radius:3px 0 0 3px"></div>
<div class="abs" style="left:1370px;top:862px;width:24px;height:30px;background:#fff;box-shadow:0 1px 2px rgba(0,0,0,0.15)"></div>
<div class="abs" style="left:1395px;top:862px;width:69px;height:30px;background:#fff;border-radius:3px;box-shadow:0 1px 2px rgba(0,0,0,0.15)"></div>
<svg style="left:1351px;top:870px" width="13" height="13"><rect x="0.7" y="0.7" width="11" height="11" rx="1" stroke="#6c7075" stroke-width="1.2" fill="none"/><path d="M2.5 4.5H10M2.5 7.5H10" stroke="#6c7075" stroke-width="1.6"/></svg>
<svg style="left:1376px;top:870px" width="14" height="14"><rect x="0.7" y="0.7" width="10.5" height="9" rx="1" stroke="#44484d" stroke-width="1.2" fill="none"/><path d="M2.5 3.5H9M2.5 6H9" stroke="#44484d" stroke-width="1.3"/><circle cx="10.5" cy="10.5" r="2.2" fill="#fff" stroke="#44484d" stroke-width="1.2"/></svg>
<div class="pt" style="left:1407px;top:871px;font-size:12.2px;color:#212529;-webkit-text-stroke:0.25px #212529">100%</div>
<svg style="left:1443.5px;top:875px" width="9" height="6"><path d="M0 0.5H8L4 5.5Z" fill="#212529"/></svg>

<!-- browser scrollbar -->
<div id="sb">
  <svg style="left:3px;top:5px" width="10" height="8"><path d="M0 7L4.5 0.5L9 7Z" fill="#8f8f8f"/></svg>
  <div class="abs" style="left:3px;top:18px;width:9px;height:851px;background:#8c8c8c;border-radius:5px"></div>
  <svg style="left:3px;top:882px" width="10" height="8"><path d="M0 0L4.5 6.5L9 0Z" fill="#8f8f8f"/></svg>
</div>

<svg style="left:0;top:885px" width="10" height="8"><path d="M0 1Q0 8 7 8H0Z" fill="#3b0c03"/></svg>
<svg style="left:1490px;top:885px" width="10" height="8"><path d="M10 1Q10 8 3 8H10Z" fill="#7a2b12"/></svg>
</body></html>
